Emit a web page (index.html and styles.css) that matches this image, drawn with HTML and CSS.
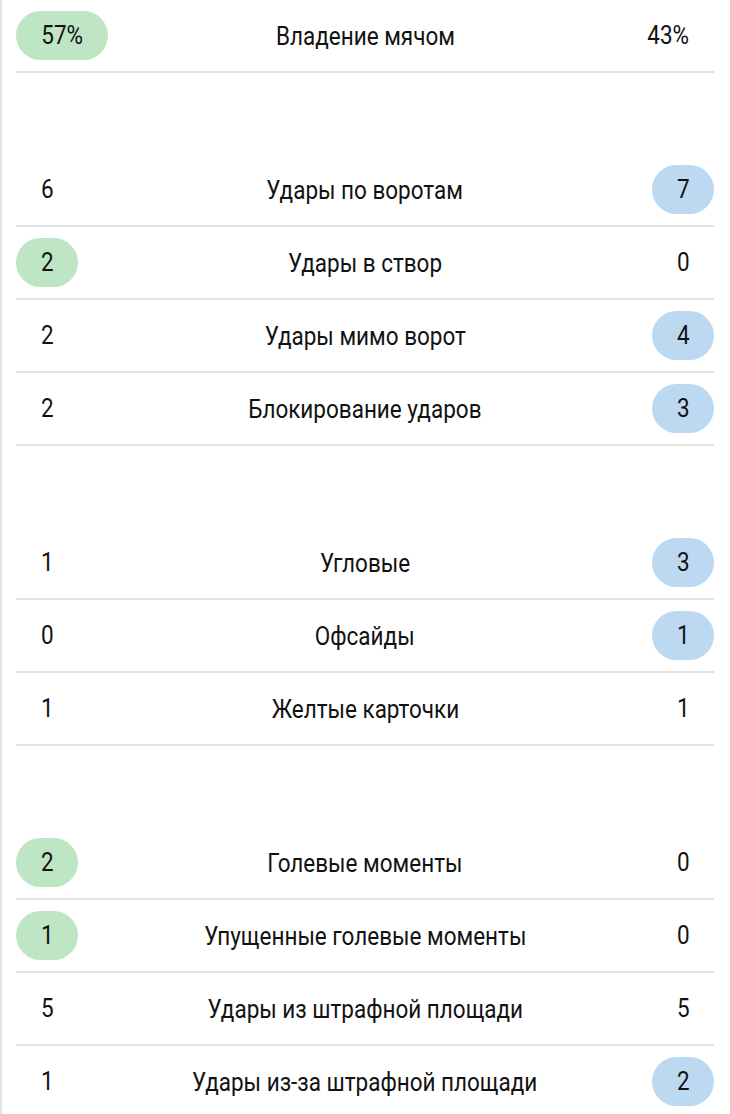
FILE: index.html
```html
<!DOCTYPE html>
<html lang="ru">
<head>
<meta charset="utf-8">
<title>Статистика</title>
<link rel="stylesheet" href="styles.css">
</head>
<body>
<div class="stats">
  <div class="group">
    <div class="row"><span class="val home win"><span class="txt">57%</span></span><span class="label">Владение мячом</span><span class="val away"><span class="txt">43%</span></span></div>
  </div>
  <div class="group">
    <div class="row"><span class="val home"><span class="txt">6</span></span><span class="label">Удары по воротам</span><span class="val away win"><span class="txt">7</span></span></div>
    <div class="row"><span class="val home win"><span class="txt">2</span></span><span class="label">Удары в створ</span><span class="val away"><span class="txt">0</span></span></div>
    <div class="row"><span class="val home"><span class="txt">2</span></span><span class="label">Удары мимо ворот</span><span class="val away win"><span class="txt">4</span></span></div>
    <div class="row"><span class="val home"><span class="txt">2</span></span><span class="label">Блокирование ударов</span><span class="val away win"><span class="txt">3</span></span></div>
  </div>
  <div class="group">
    <div class="row"><span class="val home"><span class="txt">1</span></span><span class="label">Угловые</span><span class="val away win"><span class="txt">3</span></span></div>
    <div class="row"><span class="val home"><span class="txt">0</span></span><span class="label">Офсайды</span><span class="val away win"><span class="txt">1</span></span></div>
    <div class="row"><span class="val home"><span class="txt">1</span></span><span class="label">Желтые карточки</span><span class="val away"><span class="txt">1</span></span></div>
  </div>
  <div class="group">
    <div class="row"><span class="val home win"><span class="txt">2</span></span><span class="label">Голевые моменты</span><span class="val away"><span class="txt">0</span></span></div>
    <div class="row"><span class="val home win"><span class="txt">1</span></span><span class="label">Упущенные голевые моменты</span><span class="val away"><span class="txt">0</span></span></div>
    <div class="row"><span class="val home"><span class="txt">5</span></span><span class="label">Удары из штрафной площади</span><span class="val away"><span class="txt">5</span></span></div>
    <div class="row"><span class="val home"><span class="txt">1</span></span><span class="label">Удары из-за штрафной площади</span><span class="val away win"><span class="txt">2</span></span></div>
  </div>
</div>
</body>
</html>
```
FILE: styles.css
```css
html, body {
  margin: 0;
  padding: 0;
  background: #ffffff;
}
body {
  font-family: Roboto, "Noto Sans", sans-serif;
  color: #121212;
}
.stats {
  border-left: 2px solid #e2e2e2;
  padding: 0 16px 0 14px;
  min-height: 1114px;
  box-sizing: border-box;
}
.group + .group {
  margin-top: 81px;
}
.row {
  display: grid;
  grid-template-columns: 1fr auto 1fr;
  align-items: center;
  height: 71px;
  border-bottom: 2px solid #e2e2e2;
}
.label {
  font-size: 26px;
  text-align: center;
  white-space: nowrap;
  transform: scaleX(0.865);
}
.val {
  font-size: 26px;
  height: 49px;
  line-height: 49px;
  padding: 0 22px;
  min-width: 62px;
  box-sizing: border-box;
  text-align: center;
  border-radius: 25px;
}
.txt {
  display: inline-block;
  transform: scaleX(0.865);
}
.home { justify-self: start; }
.away { justify-self: end; }
.home.win { background: #bee5c4; }
.away.win { background: #bdd9f1; }
```
